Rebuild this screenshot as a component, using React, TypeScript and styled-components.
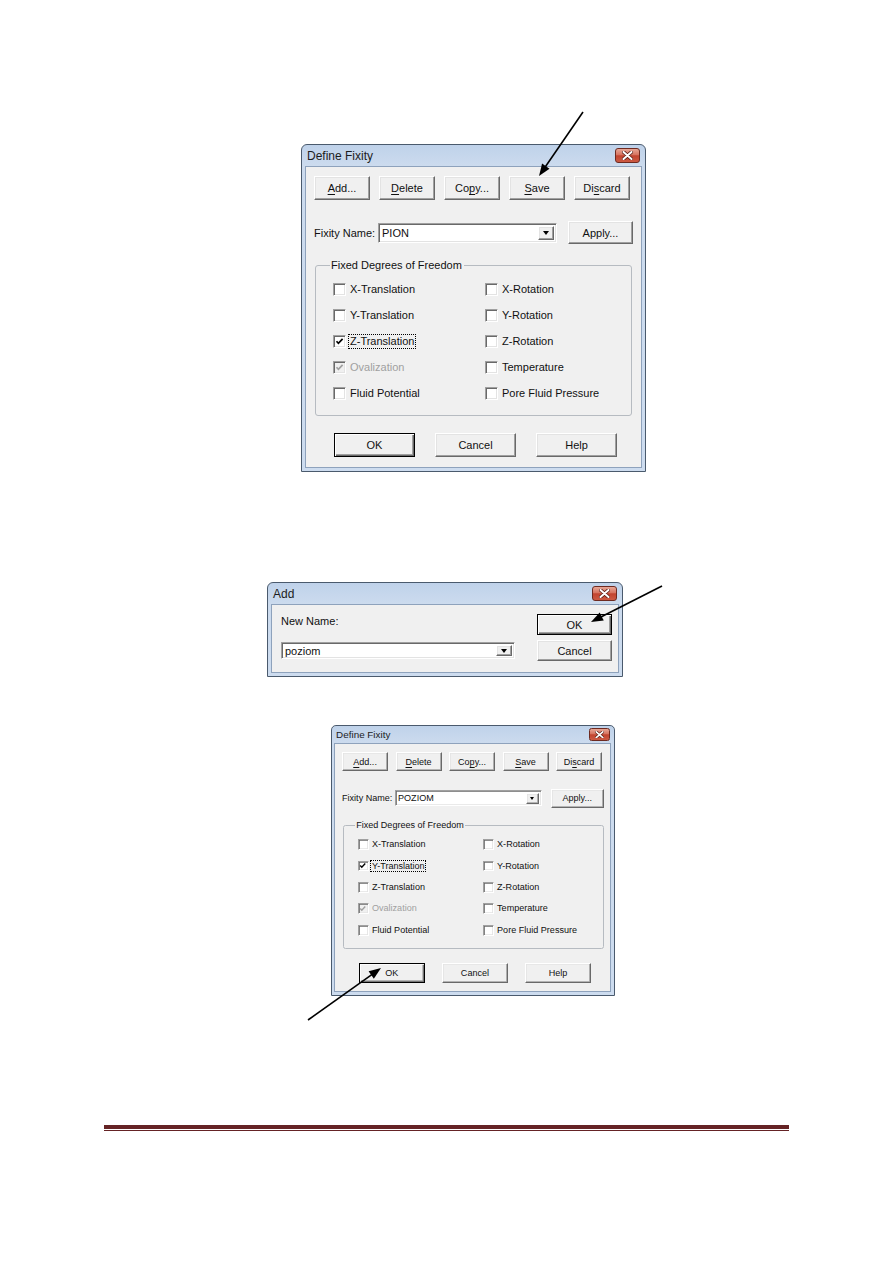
import React from "react";
import styled, { createGlobalStyle } from "styled-components";

const GlobalStyle = createGlobalStyle`
  html, body {
    margin: 0;
    padding: 0;
    background: #fff;
  }
  body {
    font-family: "Liberation Sans", Arial, sans-serif;
  }
`;

const LEFT = ["X-Translation", "Y-Translation", "Z-Translation", "Ovalization", "Fluid Potential"];
const RIGHT = ["X-Rotation", "Y-Rotation", "Z-Rotation", "Temperature", "Pore Fluid Pressure"];

type ArrowProps = { x1: number; y1: number; x2: number; y2: number };

// line with a filled head at (x2, y2)
const Arrow = ({ x1, y1, x2, y2 }: ArrowProps) => {
  const len = Math.hypot(x2 - x1, y2 - y1);
  const dx = (x2 - x1) / len;
  const dy = (y2 - y1) / len;
  const bx = x2 - dx * 12;
  const by = y2 - dy * 12;
  const nx = -dy * 4.5;
  const ny = dx * 4.5;
  return (
    <g>
      <line x1={x1} y1={y1} x2={bx + dx * 2} y2={by + dy * 2} stroke="#000" strokeWidth={1.6} />
      <polygon points={`${x2},${y2} ${bx + nx},${by + ny} ${bx - nx},${by - ny}`} fill="#000" />
    </g>
  );
};

const CloseIcon = () => (
  <svg width="11" height="9" viewBox="0 0 11 9">
    <path d="M1.5 1 L9.5 8 M9.5 1 L1.5 8" stroke="#5a1e16" strokeWidth={3.6} strokeLinecap="round" />
    <path d="M1.5 1 L9.5 8 M9.5 1 L1.5 8" stroke="#fff" strokeWidth={2} strokeLinecap="round" />
  </svg>
);

const CheckIcon = ({ $gray }: { $gray?: boolean }) => (
  <svg width="9" height="9" viewBox="0 0 9 9">
    <polyline points="1.5,4.2 3.4,6.3 7.6,1.8" fill="none" stroke={$gray ? "#a0a0a0" : "#000"} strokeWidth={1.7} />
  </svg>
);

type WindowProps = { title: string; width: number; zoom?: number; children: React.ReactNode };

const Window = ({ title, width, zoom, children }: WindowProps) => (
  <S.Window $w={width} $zoom={zoom ?? 1}>
    <S.TitleBar>
      <span>{title}</span>
      <S.CloseBtn>
        <CloseIcon />
      </S.CloseBtn>
    </S.TitleBar>
    {children}
  </S.Window>
);

const Combo = ({ value, w, h }: { value: string; w: number; h: number }) => (
  <S.Combo $w={w} $h={h}>
    <S.ComboText>{value}</S.ComboText>
    <S.DropBtn>
      <S.Triangle />
    </S.DropBtn>
  </S.Combo>
);

type FixityProps = { name: string; checked: string; focus: string; zoom?: number };

const DefineFixity = ({ name, checked, focus, zoom }: FixityProps) => {
  const items: string[] = [];
  LEFT.forEach((l, i) => items.push(l, RIGHT[i]));

  return (
    <Window title="Define Fixity" width={345} zoom={zoom}>
      <S.Client $pad="9px 8px 10px 8px">
        <S.ButtonRow>
          <S.Button $w={56} $h={24}><u>A</u>dd...</S.Button>
          <S.Button $w={56} $h={24}><u>D</u>elete</S.Button>
          <S.Button $w={56} $h={24}>Co<u>p</u>y...</S.Button>
          <S.Button $w={56} $h={24}><u>S</u>ave</S.Button>
          <S.Button $w={56} $h={24}>Di<u>s</u>card</S.Button>
        </S.ButtonRow>

        <S.NameRow>
          <S.NameLabel>Fixity Name:</S.NameLabel>
          <Combo value={name} w={179} h={20} />
          <S.Button $w={65} $h={23}>Apply...</S.Button>
        </S.NameRow>

        <S.Group>
          <S.Legend>Fixed Degrees of Freedom</S.Legend>
          <S.CheckGrid>
            {items.map((it) => {
              const disabled = it === "Ovalization";
              const on = disabled || it === checked;
              return (
                <S.CheckRow key={it}>
                  <S.Box $disabled={disabled}>{on && <CheckIcon $gray={disabled} />}</S.Box>
                  <S.CheckText $disabled={disabled} $focus={it === focus}>
                    {it}
                  </S.CheckText>
                </S.CheckRow>
              );
            })}
          </S.CheckGrid>
        </S.Group>

        <S.BottomRow>
          <S.Button $w={81} $h={24} $default>OK</S.Button>
          <S.Button $w={81} $h={24}>Cancel</S.Button>
          <S.Button $w={81} $h={24}>Help</S.Button>
        </S.BottomRow>
      </S.Client>
    </Window>
  );
};

const AddDialog = () => (
  <Window title="Add" width={356}>
    <S.Client $pad="9px 6px 11px 9px">
      <S.AddGrid>
        <S.AddLabel>New Name:</S.AddLabel>
        <S.Button $w={75} $h={21} $default>OK</S.Button>
        <Combo value="poziom" w={234} h={17} />
        <S.Button $w={75} $h={21}>Cancel</S.Button>
      </S.AddGrid>
    </S.Client>
  </Window>
);

export default function App() {
  return (
    <>
      <GlobalStyle />
      <S.Page>
        <S.Figure $top={144} $left={301}>
          <DefineFixity name="PION" checked="Z-Translation" focus="Z-Translation" />
        </S.Figure>

        <S.Figure $top={110} $left={267}>
          <AddDialog />
        </S.Figure>

        <S.Figure $top={48} $left={331}>
          <DefineFixity name="POZIOM" checked="Y-Translation" focus="Y-Translation" zoom={0.823} />
        </S.Figure>

        <S.FooterRule />

        <S.Overlay width={893} height={1263}>
          <Arrow x1={583} y1={112} x2={539} y2={176} />
          <Arrow x1={662} y1={586} x2={591} y2={622} />
          <Arrow x1={308} y1={1020} x2={381} y2={968} />
        </S.Overlay>
      </S.Page>
    </>
  );
}

const raised = `
  border: 1px solid;
  border-color: #fff #696969 #696969 #fff;
  box-shadow: inset -1px -1px #a0a0a0, inset 1px 1px #e3e3e3;
  background: #f0f0f0;
`;

const S = {
  Page: styled.div`
    position: relative;
    width: 893px;
    height: 1263px;
    overflow: hidden;
    background: #fff;
    display: flex;
    flex-direction: column;
    align-items: flex-start;
  `,
  Figure: styled.div<{ $top: number; $left: number }>`
    margin-top: ${({ $top }) => $top}px;
    margin-left: ${({ $left }) => $left}px;
  `,
  Window: styled.div<{ $w: number; $zoom: number }>`
    zoom: ${({ $zoom }) => $zoom};
    width: ${({ $w }) => $w}px;
    box-sizing: border-box;
    border: 1px solid #4a5a6d;
    border-radius: 6px 6px 0 0;
    background: linear-gradient(#bfd2ea, #ccdbee 21px, #cddcef);
    padding: 0 3px 3px;
    font-family: "Liberation Sans", Arial, sans-serif;
    font-size: 11px;
    color: #111;
  `,
  TitleBar: styled.div`
    height: 21px;
    display: flex;
    align-items: center;
    justify-content: space-between;
    padding: 0 2px 0 2px;
    font-size: 12px;
    color: #1c1c1c;
  `,
  CloseBtn: styled.div`
    width: 25px;
    height: 15px;
    box-sizing: border-box;
    border: 1px solid #6e2a20;
    border-radius: 3px;
    background: linear-gradient(#e7a797, #d7735f 45%, #c2442f 52%, #cc5a43);
    display: flex;
    align-items: center;
    justify-content: center;
  `,
  Client: styled.div<{ $pad: string }>`
    background: #f0f0f0;
    border: 1px solid #8ea2bc;
    padding: ${({ $pad }) => $pad};
  `,
  ButtonRow: styled.div`
    display: flex;
    gap: 9px;
  `,
  Button: styled.button<{ $w: number; $h: number; $default?: boolean }>`
    width: ${({ $w }) => $w}px;
    height: ${({ $h }) => $h}px;
    box-sizing: border-box;
    margin: 0;
    padding: 0;
    font-family: "Liberation Sans", Arial, sans-serif;
    font-size: 11px;
    color: #111;
    ${raised}
    ${({ $default }) =>
      $default &&
      `
      border-color: #000;
      box-shadow: inset 1px 1px #fff, inset -1px -1px #696969, inset -2px -2px #a0a0a0;
    `}
    u {
      text-decoration-thickness: 1px;
      text-underline-offset: 2px;
    }
  `,
  NameRow: styled.div`
    display: flex;
    align-items: center;
    margin-top: 21px;
  `,
  NameLabel: styled.span`
    width: 64px;
  `,
  Combo: styled.div<{ $w: number; $h: number }>`
    width: ${({ $w }) => $w}px;
    height: ${({ $h }) => $h}px;
    box-sizing: border-box;
    margin-right: 11px;
    background: #fff;
    border: 1px solid;
    border-color: #a0a0a0 #fff #fff #a0a0a0;
    box-shadow: inset 1px 1px #696969, inset -1px -1px #e3e3e3;
    display: flex;
    align-items: stretch;
    padding: 2px;
  `,
  ComboText: styled.span`
    flex: 1;
    display: flex;
    align-items: center;
    padding-left: 1px;
    font-size: 11px;
  `,
  DropBtn: styled.span`
    width: 16px;
    box-sizing: border-box;
    ${raised}
    display: flex;
    align-items: center;
    justify-content: center;
  `,
  Triangle: styled.span`
    width: 0;
    height: 0;
    border-left: 3.5px solid transparent;
    border-right: 3.5px solid transparent;
    border-top: 4px solid #000;
  `,
  Group: styled.fieldset`
    margin: 15px 0 0 1px;
    width: 317px;
    box-sizing: border-box;
    border: 1px solid #b6bbc1;
    border-radius: 3px;
    padding: 4px 8px 9px 17px;
    min-inline-size: 0;
  `,
  Legend: styled.legend`
    padding: 0 2px 0 1px;
    margin-left: -3px;
    font-size: 11px;
    line-height: 13px;
  `,
  CheckGrid: styled.div`
    display: grid;
    grid-template-columns: 152px 1fr;
    grid-auto-rows: 26px;
    align-items: center;
  `,
  CheckRow: styled.div`
    display: flex;
    align-items: center;
    gap: 2px;
  `,
  Box: styled.span<{ $disabled?: boolean }>`
    width: 13px;
    height: 13px;
    box-sizing: border-box;
    border: 1px solid;
    border-color: #a0a0a0 #fff #fff #a0a0a0;
    box-shadow: inset 1px 1px #696969, inset -1px -1px #e3e3e3;
    background: ${({ $disabled }) => ($disabled ? "#f0f0f0" : "#fff")};
    display: flex;
    align-items: center;
    justify-content: center;
  `,
  CheckText: styled.span<{ $disabled?: boolean; $focus?: boolean }>`
    padding: 0 1px;
    line-height: 13px;
    border: 1px dotted ${({ $focus }) => ($focus ? "#000" : "transparent")};
    color: ${({ $disabled }) => ($disabled ? "#a0a0a0" : "#111")};
  `,
  BottomRow: styled.div`
    display: flex;
    gap: 20px;
    margin-top: 17px;
    padding-left: 20px;
  `,
  AddGrid: styled.div`
    display: grid;
    grid-template-columns: 234px 75px;
    grid-template-rows: 21px 21px;
    column-gap: 22px;
    row-gap: 5px;
    align-items: center;
    & > div {
      margin-right: 0;
    }
  `,
  AddLabel: styled.span`
    align-self: start;
    padding-top: 1px;
  `,
  FooterRule: styled.div`
    margin-top: 129px;
    margin-left: 104px;
    width: 685px;
    height: 1px;
    border-top: 4px solid #652325;
    border-bottom: 1px solid #652325;
  `,
  Overlay: styled.svg`
    position: absolute;
    left: 0;
    top: 0;
    pointer-events: none;
  `,
};
